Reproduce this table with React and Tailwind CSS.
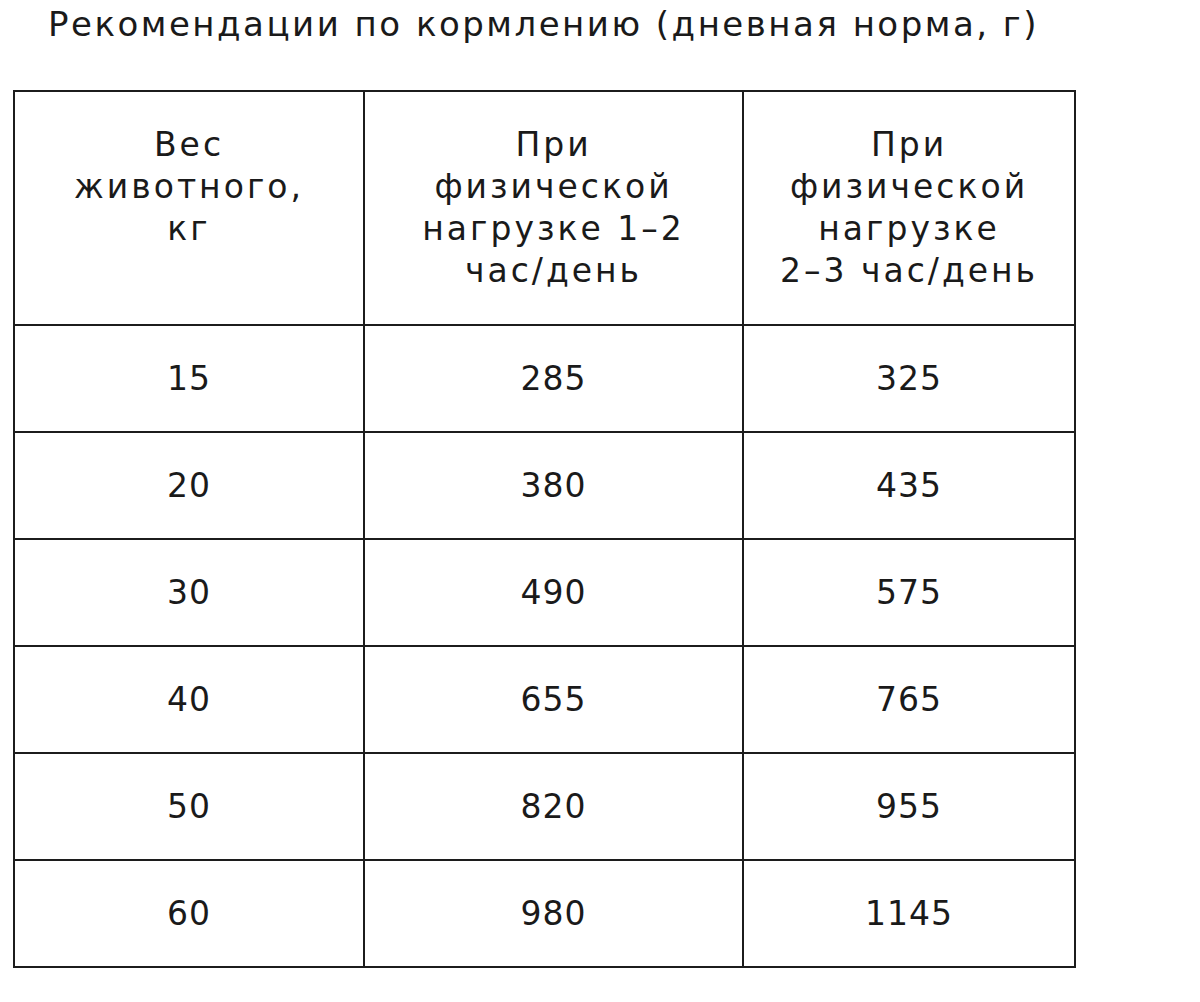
const rows = [
  ["15", "285", "325"],
  ["20", "380", "435"],
  ["30", "490", "575"],
  ["40", "655", "765"],
  ["50", "820", "955"],
  ["60", "980", "1145"],
];

const cell = "border-2 border-[#1c1c1c] text-center align-middle";

export default function App() {
  return (
    <div className="min-h-[1002px] w-[1200px] bg-white text-[#1a1a1a] font-['DejaVu_Sans',sans-serif]">
      <h1 className="pl-[48px] pt-[2px] text-[34px] leading-[44px] font-normal tracking-[2.5px]">
        Рекомендации по кормлению (дневная норма, г)
      </h1>

      <table className="ml-[13px] mt-[44px] border-collapse text-[33px] leading-[42px] tracking-[3px]">
        <colgroup>
          <col className="w-[350px]" />
          <col className="w-[379px]" />
          <col className="w-[332px]" />
        </colgroup>
        <thead>
          <tr className="h-[234px]">
            <th className={`${cell} !align-top pt-[32px] font-normal`}>
              Вес
              <br />
              животного,
              <br />
              кг
            </th>
            <th className={`${cell} font-normal`}>
              При
              <br />
              физической
              <br />
              нагрузке 1–2
              <br />
              час/день
            </th>
            <th className={`${cell} font-normal`}>
              При
              <br />
              физической
              <br />
              нагрузке
              <br />
              2–3 час/день
            </th>
          </tr>
        </thead>
        <tbody className="tracking-[1px]">
          {rows.map((r) => (
            <tr key={r[0]} className="h-[107px]">
              {r.map((v, i) => (
                <td key={i} className={cell}>
                  {v}
                </td>
              ))}
            </tr>
          ))}
        </tbody>
      </table>
    </div>
  );
}
